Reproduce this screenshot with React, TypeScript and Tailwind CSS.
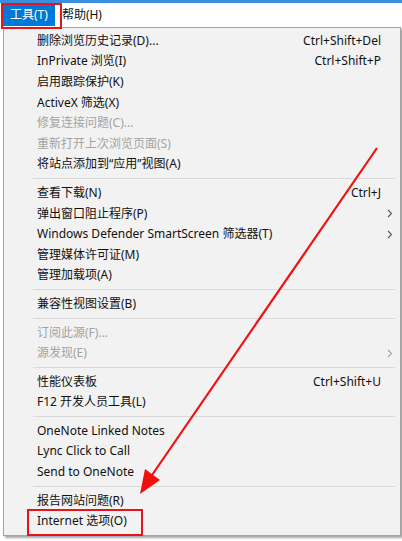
import React from "react";

type Item =
  | { sep: true }
  | { sep?: false; label: string; shortcut?: string; arrow?: boolean; disabled?: boolean };

const items: Item[] = [
  { label: "删除浏览历史记录(D)...", shortcut: "Ctrl+Shift+Del" },
  { label: "InPrivate 浏览(I)", shortcut: "Ctrl+Shift+P" },
  { label: "启用跟踪保护(K)" },
  { label: "ActiveX 筛选(X)" },
  { label: "修复连接问题(C)...", disabled: true },
  { label: "重新打开上次浏览页面(S)", disabled: true },
  { label: "将站点添加到“应用”视图(A)" },
  { sep: true },
  { label: "查看下载(N)", shortcut: "Ctrl+J" },
  { label: "弹出窗口阻止程序(P)", arrow: true },
  { label: "Windows Defender SmartScreen 筛选器(T)", arrow: true },
  { label: "管理媒体许可证(M)" },
  { label: "管理加载项(A)" },
  { sep: true },
  { label: "兼容性视图设置(B)" },
  { sep: true },
  { label: "订阅此源(F)...", disabled: true },
  { label: "源发现(E)", disabled: true, arrow: true },
  { sep: true },
  { label: "性能仪表板", shortcut: "Ctrl+Shift+U" },
  { label: "F12 开发人员工具(L)" },
  { sep: true },
  { label: "OneNote Linked Notes" },
  { label: "Lync Click to Call" },
  { label: "Send to OneNote" },
  { sep: true },
  { label: "报告网站问题(R)" },
  { label: "Internet 选项(O)" },
];

function Chevron({ color }: { color: string }) {
  return (
    <svg width="6" height="9" viewBox="0 0 6 9" className="block">
      <polyline points="1,1 4.5,4.5 1,8" fill="none" stroke={color} strokeWidth="1.1" />
    </svg>
  );
}

export default function App() {
  return (
    <div
      className="relative w-[402px] h-[541px] overflow-hidden bg-white text-[12px] text-[#111]"
      style={{ fontFamily: '"Noto Sans", "Noto Sans CJK SC", sans-serif' }}
    >
      <div className="h-[3px] bg-[#3b8fdd]" />
      <div className="flex h-[24px] items-center bg-white">
        <div className="ml-[3px] flex h-[22px] items-center bg-[#0078d7] px-[7px] text-white">工具(T)</div>
        <div className="ml-[5px] flex h-[22px] items-center px-[2px]">帮助(H)</div>
      </div>
      <div className="ml-[3px] w-[398px] border border-[#a3a3a3] bg-[#f2f2f2] pt-[2.5px] pb-[3px] shadow-[2px_2px_2px_rgba(0,0,0,0.35)]">
        {items.map((it, i) =>
          it.sep ? (
            <div key={i} className="flex h-[8px] items-center pl-[29px] pr-[5px]">
              <div className="h-px w-full bg-[#dadada]" />
            </div>
          ) : (
            <div
              key={i}
              className={`flex h-[20.6px] items-center pl-[33px] leading-none ${it.disabled ? "text-[#a3a3a3]" : ""}`}
            >
              <span className="whitespace-nowrap">{it.label}</span>
              <span className="ml-auto whitespace-nowrap">{it.shortcut ?? ""}</span>
              <span className="flex w-[19px] items-center pl-[6px]">
                {it.arrow ? <Chevron color={it.disabled ? "#a3a3a3" : "#555"} /> : null}
              </span>
            </div>
          )
        )}
      </div>

      {/* red annotations */}
      <div className="absolute left-[1px] top-[3px] h-[26px] w-[61px] border-2 border-[#e8141b]" />
      <div className="absolute left-[27px] top-[509px] h-[27px] w-[116px] border-2 border-[#e8141b]" />
      <svg className="absolute left-0 top-0" width="402" height="541" viewBox="0 0 402 541">
        <line x1="377" y1="148" x2="150" y2="478" stroke="#f01010" strokeWidth="2.2" />
        <polygon points="140,494 145,469 160,480" fill="#f01010" />
      </svg>
    </div>
  );
}
